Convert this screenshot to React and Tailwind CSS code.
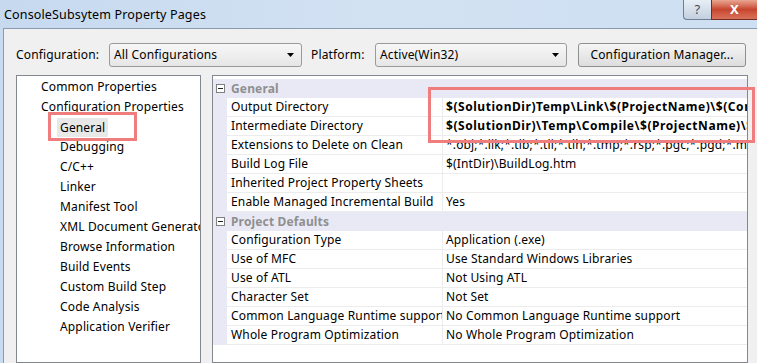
import React from "react";

const treeItems = [
  { label: "Common Properties", level: 0 },
  { label: "Configuration Properties", level: 0 },
  { label: "General", level: 1, selected: true },
  { label: "Debugging", level: 1 },
  { label: "C/C++", level: 1 },
  { label: "Linker", level: 1 },
  { label: "Manifest Tool", level: 1 },
  { label: "XML Document Generator", level: 1 },
  { label: "Browse Information", level: 1 },
  { label: "Build Events", level: 1 },
  { label: "Custom Build Step", level: 1 },
  { label: "Code Analysis", level: 1 },
  { label: "Application Verifier", level: 1 },
];

const sections = [
  {
    title: "General",
    rows: [
      ["Output Directory", "$(SolutionDir)Temp\\Link\\$(ProjectName)\\$(ConfigurationName)", true],
      ["Intermediate Directory", "$(SolutionDir)\\Temp\\Compile\\$(ProjectName)\\$(ConfigurationName)", true],
      ["Extensions to Delete on Clean", "*.obj;*.ilk;*.tlb;*.tli;*.tlh;*.tmp;*.rsp;*.pgc;*.pgd;*.meta;$(TargetPath)"],
      ["Build Log File", "$(IntDir)\\BuildLog.htm"],
      ["Inherited Project Property Sheets", ""],
      ["Enable Managed Incremental Build", "Yes"],
    ],
  },
  {
    title: "Project Defaults",
    rows: [
      ["Configuration Type", "Application (.exe)"],
      ["Use of MFC", "Use Standard Windows Libraries"],
      ["Use of ATL", "Not Using ATL"],
      ["Character Set", "Not Set"],
      ["Common Language Runtime support", "No Common Language Runtime support"],
      ["Whole Program Optimization", "No Whole Program Optimization"],
    ],
  },
];

function DropArrow() {
  return (
    <svg width="7" height="4" viewBox="0 0 7 4" className="shrink-0">
      <path d="M0 0h7L3.5 4z" fill="#000" />
    </svg>
  );
}

function Select({ value, className }) {
  return (
    <div
      className={`h-[24px] flex items-center justify-between pl-[4px] pr-[7px] rounded-[3px] border border-[#9a9a9a] bg-gradient-to-b from-[#f7f7f7] to-[#e6e6e6] ${className}`}
    >
      <span>{value}</span>
      <DropArrow />
    </div>
  );
}

function Collapse() {
  return (
    <div className="w-[9px] h-[9px] border border-[#808080] bg-white flex items-center justify-center">
      <div className="w-[5px] h-px bg-[#222]" />
    </div>
  );
}

function TitleBar() {
  return (
    <div className="h-[28px] flex justify-between bg-gradient-to-r from-[#c6d9ef] via-[#d3e2f3] to-[#cddff2]">
      <div className="pl-[4px] pt-[6px] text-[12.5px] text-black">ConsoleSubsytem Property Pages</div>
      <div className="flex items-start">
        <div className="w-[28px] h-[20px] rounded-bl-[4px] border border-t-0 border-r-0 border-[#6f7f96] bg-gradient-to-b from-[#e8eef6] to-[#c3d0e0] flex items-center justify-center text-[13px] text-[#3b4a5e]">
          ?
        </div>
        <div className="w-[46px] h-[20px] border-l border-b border-[#7a2a20] bg-gradient-to-b from-[#e8a592] via-[#c7452f] to-[#d9725b] flex items-center justify-center text-[13px] font-bold text-white">
          X
        </div>
      </div>
    </div>
  );
}

function Tree() {
  return (
    <div className="w-[185px] border border-[#828790] bg-white pt-[1px] overflow-hidden">
      {treeItems.map((item) => (
        <div
          key={item.label}
          className={`h-[20px] flex items-center whitespace-nowrap overflow-hidden ${item.level ? "pl-[43px]" : "pl-[24px]"}`}
        >
          <span className={item.selected ? "bg-[#e8e8e8] px-[3px] -mx-[3px] leading-[19px]" : ""}>{item.label}</span>
        </div>
      ))}
    </div>
  );
}

function Grid() {
  return (
    <div className="w-[536px] border border-[#828790] bg-white pt-[3px] overflow-hidden">
      {sections.map((section) => (
        <div key={section.title}>
          <div className="h-[19px] flex items-center bg-[#e9e9f5]">
            <div className="w-[14px] flex justify-center pl-px">
              <Collapse />
            </div>
            <div className="pl-[4px] font-bold text-[#8f8f8f]">{section.title}</div>
          </div>
          {section.rows.map(([name, value, bold]) => (
            <div key={name} className="h-[19px] flex">
              <div className="w-[14px] shrink-0 bg-[#e9e9f5]" />
              <div className="w-[216px] shrink-0 pl-[4px] flex items-center border-b border-r border-[#ececec] whitespace-nowrap overflow-hidden">
                {name}
              </div>
              <div
                className={`flex-1 pl-[3px] flex items-center border-b border-[#ececec] whitespace-nowrap overflow-hidden ${bold ? "font-bold tracking-[0.55px]" : ""}`}
              >
                {value}
              </div>
            </div>
          ))}
        </div>
      ))}
    </div>
  );
}

export default function App() {
  return (
    <div className="relative w-[757px] h-[363px] overflow-hidden flex flex-col bg-[#f0f0f0] text-[12px] tracking-[0.15px] text-black font-['Noto_Sans',sans-serif]">
      <TitleBar />
      <div className="flex-1 flex min-h-0">
        <div className="w-[3px] bg-[#c9dbf0]" />
        <div className="flex-1 border-l border-t border-[#8a9bb0] pl-[12px] pt-[14px] flex flex-col gap-[8px]">
          <div className="flex items-center">
            <span className="w-[93px]">Configuration:</span>
            <Select value="All Configurations" className="w-[193px]" />
            <span className="ml-[9px] w-[64px]">Platform:</span>
            <Select value="Active(Win32)" className="w-[192px]" />
            <div className="ml-[11px] w-[168px] h-[24px] flex items-center justify-center rounded-[3px] border border-[#8e8f8f] bg-gradient-to-b from-[#f5f5f5] to-[#dddddd]">
              Configuration Manager...
            </div>
          </div>
          <div className="flex-1 flex gap-[11px] min-h-0">
            <Tree />
            <Grid />
          </div>
        </div>
      </div>
      <div className="absolute left-[48px] top-[112px] w-[89px] h-[29px] border-[3px] border-[#ef7d7d]" />
      <div className="absolute left-[428px] top-[87px] w-[327px] h-[56px] border-[3px] border-[#ef7d7d]" />
    </div>
  );
}
